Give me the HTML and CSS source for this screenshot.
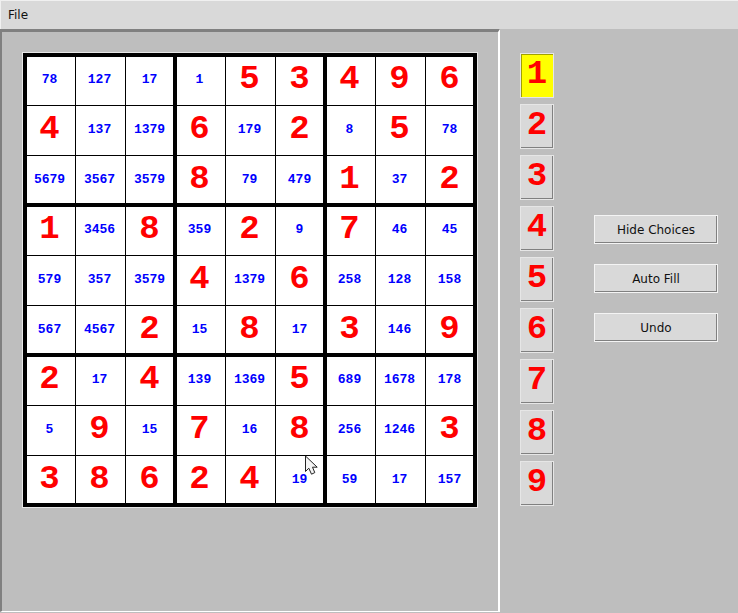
FILE: index.html
```html
<!DOCTYPE html>
<html lang="en">
<head>
  <meta charset="UTF-8">
  <title>Sudoku</title>
  <link rel="stylesheet" href="styles.css">
</head>
<body>
  <div class="menubar"><span class="menu-item">File</span></div>
  <div class="main">
    <div class="left-panel">
      <div class="board">
        <div class="box">
          <div class="cell">78</div><div class="cell">127</div><div class="cell">17</div>
          <div class="cell big">4</div><div class="cell">137</div><div class="cell">1379</div>
          <div class="cell">5679</div><div class="cell">3567</div><div class="cell">3579</div>
        </div>
        <div class="box">
          <div class="cell">1</div><div class="cell big">5</div><div class="cell big">3</div>
          <div class="cell big">6</div><div class="cell">179</div><div class="cell big">2</div>
          <div class="cell big">8</div><div class="cell">79</div><div class="cell">479</div>
        </div>
        <div class="box">
          <div class="cell big">4</div><div class="cell big">9</div><div class="cell big">6</div>
          <div class="cell">8</div><div class="cell big">5</div><div class="cell">78</div>
          <div class="cell big">1</div><div class="cell">37</div><div class="cell big">2</div>
        </div>
        <div class="box">
          <div class="cell big">1</div><div class="cell">3456</div><div class="cell big">8</div>
          <div class="cell">579</div><div class="cell">357</div><div class="cell">3579</div>
          <div class="cell">567</div><div class="cell">4567</div><div class="cell big">2</div>
        </div>
        <div class="box">
          <div class="cell">359</div><div class="cell big">2</div><div class="cell">9</div>
          <div class="cell big">4</div><div class="cell">1379</div><div class="cell big">6</div>
          <div class="cell">15</div><div class="cell big">8</div><div class="cell">17</div>
        </div>
        <div class="box">
          <div class="cell big">7</div><div class="cell">46</div><div class="cell">45</div>
          <div class="cell">258</div><div class="cell">128</div><div class="cell">158</div>
          <div class="cell big">3</div><div class="cell">146</div><div class="cell big">9</div>
        </div>
        <div class="box">
          <div class="cell big">2</div><div class="cell">17</div><div class="cell big">4</div>
          <div class="cell">5</div><div class="cell big">9</div><div class="cell">15</div>
          <div class="cell big">3</div><div class="cell big">8</div><div class="cell big">6</div>
        </div>
        <div class="box">
          <div class="cell">139</div><div class="cell">1369</div><div class="cell big">5</div>
          <div class="cell big">7</div><div class="cell">16</div><div class="cell big">8</div>
          <div class="cell big">2</div><div class="cell big">4</div><div class="cell">19</div>
        </div>
        <div class="box">
          <div class="cell">689</div><div class="cell">1678</div><div class="cell">178</div>
          <div class="cell">256</div><div class="cell">1246</div><div class="cell big">3</div>
          <div class="cell">59</div><div class="cell">17</div><div class="cell">157</div>
        </div>
        <svg class="cursor" width="14" height="21" viewBox="0 0 14 21">
          <path d="M0.5 1 L0.5 16.5 L3.8 13.2 L6.5 19.2 L9.8 17.6 L7.5 12.2 L12.2 12.2 Z" fill="#f4f4f4" stroke="#222" stroke-width="1"/>
        </svg>
      </div>
    </div>
    <div class="right-panel">
      <div class="palette">
        <div class="digit selected">1</div>
        <div class="digit">2</div>
        <div class="digit">3</div>
        <div class="digit">4</div>
        <div class="digit">5</div>
        <div class="digit">6</div>
        <div class="digit">7</div>
        <div class="digit">8</div>
        <div class="digit">9</div>
      </div>
      <div class="actions">
        <div class="action">Hide Choices</div>
        <div class="action">Auto Fill</div>
        <div class="action">Undo</div>
      </div>
    </div>
  </div>
</body>
</html>
```

FILE: styles.css
```css
html, body {
  margin: 0;
  padding: 0;
  height: 100%;
  overflow: hidden;
}
body {
  background-color: #bebebe;
  font-family: "DejaVu Sans", sans-serif;
  font-size: 12px;
  color: #111;
}
.menubar {
  height: 29px;
  box-sizing: border-box;
  border-top: 1px solid #f0f0f0;
  border-left: 1px solid #f0f0f0;
  background-color: #d9d9d9;
  display: flex;
  align-items: center;
}
.menu-item {
  padding-left: 7px;
}
.main {
  display: flex;
  height: 584px;
}
.left-panel {
  width: 500px;
  height: 583px;
  box-sizing: border-box;
  border-top: 3px solid #808080;
  border-left: 2px solid #808080;
  border-right: 2px solid #fff;
  border-bottom: 1px solid #fff;
  padding: 21px 0 0 21px;
}
.board {
  position: relative;
  width: 454px;
  height: 454px;
  box-sizing: border-box;
  background-color: #000;
  outline: 1px solid #e8e8e8;
  padding: 4px;
  display: grid;
  grid-template-columns: repeat(3, 146px);
  grid-template-rows: repeat(3, 146px);
  gap: 4px;
}
.box {
  display: grid;
  grid-template-columns: 48px 49px 47px;
  grid-template-rows: 48px 49px 47px;
  gap: 1px;
}
.cell {
  background-color: #fff;
  display: flex;
  align-items: center;
  justify-content: center;
  color: #0000ff;
  font-family: "Liberation Mono", monospace;
  font-weight: bold;
  font-size: 13px;
}
/* text sits on a 50px pitch, not in the middle of the uneven cells */
.cell:nth-child(3n+1) {
  padding-right: 3px;
}
.cell:nth-child(3n+2) {
  padding-right: 2px;
}
.cell:nth-child(-n+3) {
  padding-bottom: 4px;
}
.cell:nth-child(n+4):nth-child(-n+6) {
  padding-bottom: 3px;
}
.cell:nth-child(n+7) {
  padding-bottom: 1px;
}
.cell.big {
  color: #ff0000;
  font-size: 34px;
}
.cursor {
  position: absolute;
  left: 282px;
  top: 402px;
}
.right-panel {
  display: flex;
  padding-left: 20px;
}
.palette {
  display: flex;
  flex-direction: column;
  gap: 6px;
  padding-top: 24px;
}
.digit {
  width: 34px;
  height: 45px;
  box-sizing: border-box;
  padding-bottom: 4px;
  background-color: #d9d9d9;
  border: 1px solid #e6e6e6;
  box-shadow: inset -1px -1px 0 #808080;
  display: flex;
  align-items: center;
  justify-content: center;
  color: #ff0000;
  font-family: "Liberation Mono", monospace;
  font-weight: bold;
  font-size: 34px;
}
.digit.selected {
  background-color: #ffff00;
  box-shadow: inset 1px 1px 0 #a0a000;
}
.actions {
  display: flex;
  flex-direction: column;
  gap: 20px;
  margin: 186px 0 0 40px;
}
.action {
  width: 124px;
  height: 29px;
  box-sizing: border-box;
  background-color: #d9d9d9;
  border: 1px solid #f4f4f4;
  box-shadow: inset -1px -1px 0 #808080;
  display: flex;
  align-items: center;
  justify-content: center;
}
```
